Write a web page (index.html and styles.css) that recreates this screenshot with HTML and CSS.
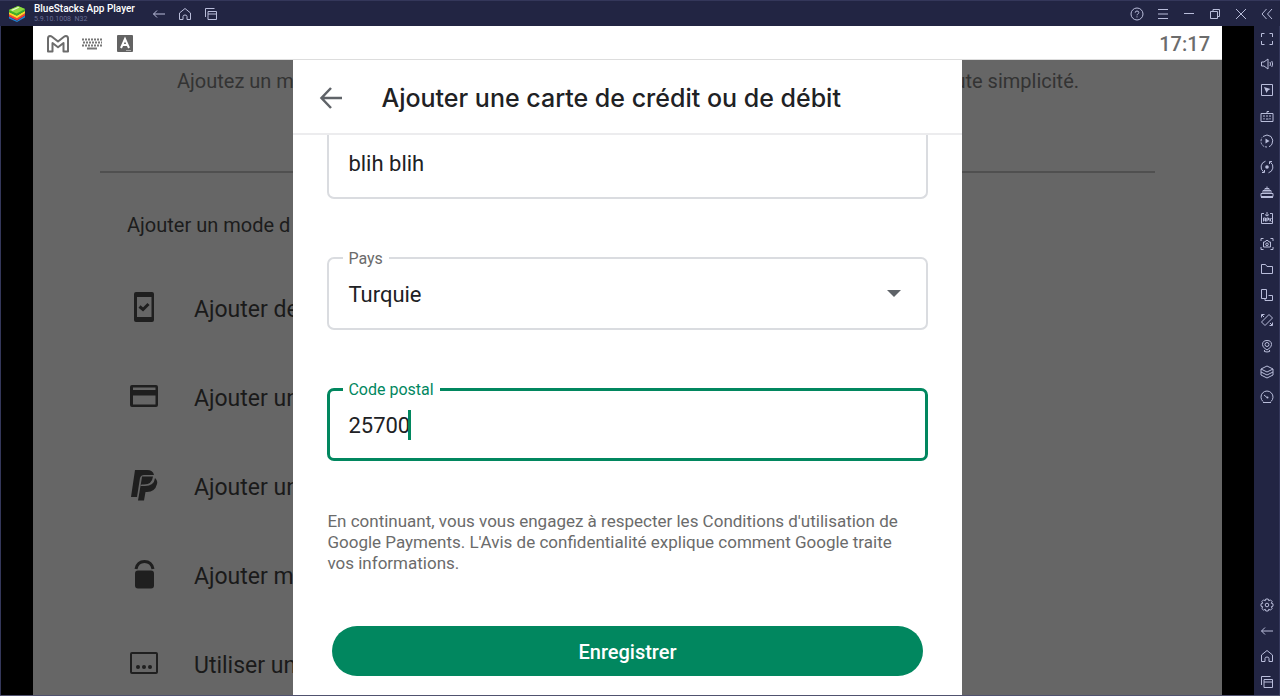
FILE: index.html
```
<!DOCTYPE html>
<html lang="fr">
<head>
  <meta charset="UTF-8">
  <meta name="viewport" content="width=device-width, initial-scale=1.0">
  <title>BlueStacks App Player</title>
  <link rel="stylesheet" href="styles.css">
</head>
<body>
  <header class="titlebar">
    <svg class="logo" width="18" height="18" viewBox="0 0 18 18">
      <path d="M1 11.5L9 15.8L17 10.5V12.6L9 17L1 13.4Z" fill="#1b86d8"/>
      <path d="M1 9L9 13L17 8V10.6L9 15.4L1 11.6Z" fill="#ef3e36"/>
      <path d="M1 6.8L9 10.6L17 5.8V8.2L9 13.2L1 9.2Z" fill="#ffd42a"/>
      <path d="M1 5L10 1L17 4V6L8.6 10.8L1 7.2Z" fill="#3fae2a"/>
      <path d="M1 5L10 1L17 4L8.6 8.6Z" fill="#8ed83f"/>
      <path d="M3 5L10 2L11.5 2.6L4.6 5.8Z" fill="#e9f7d8"/>
    </svg>
    <div class="app-info">
      <div class="app-name">BlueStacks App Player</div>
      <div class="app-version">5.9.10.1008&nbsp; N32</div>
    </div>
    <nav class="bar-buttons">
      <button class="icon-button" aria-label="Retour"><svg viewBox="0 0 14 14"><path d="M13 7H1.5M5 3.5L1.5 7L5 10.5"/></svg></button>
      <button class="icon-button" aria-label="Accueil"><svg viewBox="0 0 14 14"><path d="M1.5 6L7 1.5L12.5 6V12.5H9V9.5Q9 8 7 8Q5 8 5 9.5V12.5H1.5Z"/></svg></button>
      <button class="icon-button" aria-label="Applications récentes"><svg viewBox="0 0 14 14"><path d="M4 4.5H12.5V12.5H4ZM4 7H12.5M1.5 10V1.5H10.5"/></svg></button>
    </nav>
    <div class="bar-buttons window-buttons">
      <button class="icon-button" aria-label="Aide"><svg viewBox="0 0 14 14"><circle cx="7" cy="7" r="6"/><path d="M5.2 5.7Q5.2 4 7 4Q8.8 4 8.8 5.5Q8.8 6.5 7.8 7Q7 7.4 7 8.3M7 9.4V10.4"/></svg></button>
      <button class="icon-button" aria-label="Menu"><svg viewBox="0 0 14 14"><path d="M2 2.5H12M2 7H12M2 11.5H12"/></svg></button>
      <button class="icon-button" aria-label="Réduire"><svg viewBox="0 0 14 14"><path d="M2 6.5H12"/></svg></button>
      <button class="icon-button" aria-label="Restaurer"><svg viewBox="0 0 14 14"><path d="M2.5 4.5H9.5V11.5H2.5ZM5 4.5V2.5H11.5V9.5H9.5"/></svg></button>
      <button class="icon-button" aria-label="Fermer"><svg viewBox="0 0 14 14"><path d="M2 2L12 12M12 2L2 12"/></svg></button>
      <button class="icon-button" aria-label="Replier"><svg viewBox="0 0 14 14"><path d="M6.5 2L2 7L6.5 12M12 2L7.5 7L12 12"/></svg></button>
    </div>
  </header>

  <div class="player">
    <main class="screen">
      <div class="statusbar">
        <div class="status-icons">
          <svg width="24" height="20" viewBox="0 0 24 20" fill="none" stroke="#6c6c6c" stroke-width="2" stroke-linejoin="round">
            <path d="M2 4.5Q2 2 4 2Q5 2 6 2.8L12 7.5L18 2.8Q19 2 20 2Q22 2 22 4.5V17.5H17.5V9L12 13.3L6.5 9V17.5H2Z"/>
          </svg>
          <svg width="20" height="12" viewBox="0 0 20 12" fill="none" stroke="#777">
            <path d="M0 1.500H20M1 4.500H20M0 7.500H20" stroke-width="2" stroke-dasharray="2 1"/>
            <path d="M5 10.500H15" stroke-width="2"/>
          </svg>
          <svg width="16" height="17" viewBox="0 0 16 17">
            <rect width="16" height="17" rx="1" fill="#636363"/>
            <path d="M4 13L8 4L12 13M5.5 10H10.5" fill="none" stroke="#fff" stroke-width="2"/>
            <path d="M9 15.5H14" stroke="#aaa"/>
          </svg>
        </div>
        <div class="clock">17:17</div>
      </div>

      <div class="page">
        <section class="backdrop backdrop-left">
          <p class="intro">Ajoutez un m</p>
          <hr>
          <h2>Ajouter un mode d</h2>
          <ul class="methods">
            <li>
              <svg viewBox="0 0 32 32"><path d="M8 1H24Q26 1 26 3V29Q26 31 24 31H8Q6 31 6 29V3Q6 1 8 1ZM9 6V26H23.500V6Z" fill-rule="evenodd"/><path d="M11.500 15.500L15 18.500L20.500 13" class="line"/></svg>
              <span>Ajouter de</span>
            </li>
            <li>
              <svg viewBox="0 0 32 32"><path d="M4 5H28Q30 5 30 7V25Q30 27 28 27H4Q2 27 2 25V7Q2 5 4 5ZM5 7.500V10H27.500V7.500ZM5 15.500V24.500H27.500V15.500Z" fill-rule="evenodd"/></svg>
              <span>Ajouter un</span>
            </li>
            <li>
              <svg viewBox="0 0 32 32"><path d="M7 1H19Q25 1 26 6H16Q13 6 12 9L9 28H3Z"/><path d="M14 7.500H25Q24 15.500 16 15.500H13.500L12.500 17L14 8Z"/><path d="M27 9Q30 12 29 15Q27 23 19 23H17.500L16 31.500H10L12.500 17H17Q26 17 27 9Z"/></svg>
              <span>Ajouter un</span>
            </li>
            <li>
              <svg viewBox="0 0 32 32"><path d="M8 11Q9.500 3.500 16.500 3.500Q23.500 3.500 25 11" class="line"/><rect x="7" y="12.500" width="19" height="18" rx="3"/></svg>
              <span>Ajouter m</span>
            </li>
            <li>
              <svg viewBox="0 0 32 32"><rect x="3" y="6" width="26" height="20" rx="1" class="line thin"/><circle cx="10" cy="20" r="2"/><circle cx="16" cy="20" r="2"/><circle cx="22" cy="20" r="2"/></svg>
              <span>Utiliser un</span>
            </li>
          </ul>
        </section>

        <form class="dialog">
          <div class="dialog-header">
            <button type="button" class="back" aria-label="Retour">
              <svg width="24" height="24" viewBox="0 0 24 24" fill="none" stroke="#5f6368" stroke-width="2.500"><path d="M23 12H3M12 2L2.500 12L12 22"/></svg>
            </button>
            <h1>Ajouter une carte de crédit ou de débit</h1>
          </div>
          <div class="dialog-body">
            <div class="field field-cut">
              <input type="text" value="blih blih" aria-label="Nom">
            </div>
            <fieldset class="field">
              <legend><label for="country">Pays</label></legend>
              <select id="country">
                <option>Turquie</option>
              </select>
            </fieldset>
            <fieldset class="field field-active">
              <legend><label for="postal">Code postal</label></legend>
              <input id="postal" type="text" value="25700"><span class="caret"></span>
            </fieldset>
            <p class="terms">En continuant, vous vous engagez à respecter les Conditions d'utilisation de Google Payments. L'Avis de confidentialité explique comment Google traite vos informations.</p>
            <button type="submit" class="save">Enregistrer</button>
          </div>
        </form>

        <section class="backdrop backdrop-right">
          <p class="intro">ute simplicité.</p>
          <hr>
        </section>
      </div>
    </main>

    <aside class="sidebar">
      <div class="tools">
        <button class="icon-button" aria-label="Plein écran"><svg viewBox="0 0 14 14"><path d="M1.500 5V1.500H4.500M9.500 1.500H12.500V5M12.500 9V12.500H9.500M4.500 12.500H1.500V9"/></svg></button>
        <button class="icon-button" aria-label="Volume"><svg viewBox="0 0 14 14"><path d="M1.500 5H4L8 2V12L4 9H1.500ZM10 5Q11 7 10 9M11.800 4Q13.500 7 11.800 10"/></svg></button>
        <button class="icon-button" aria-label="Curseur"><svg viewBox="0 0 14 14"><path d="M1.500 1.500H12.500V12.500H1.500Z"/><path d="M4 4L10.500 6L8 7.500L6.500 10Z" class="solid"/></svg></button>
        <button class="icon-button" aria-label="Commandes clavier"><svg viewBox="0 0 14 14"><path d="M1 4.500H13V12.500H1ZM7 4.500V2.500H9M3 7H5M6 7H8M9 7H11M4 9V10.500M6 10H8.500M10 9V10.500"/></svg></button>
        <button class="icon-button" aria-label="Macro"><svg viewBox="0 0 14 14"><path d="M3 2.500Q7 -0.500 11 2.500Q14 6 12 10Q11 12 9 12.700"/><path d="M7 13Q2 13 1 8Q1 5 2 3.500" stroke-dasharray="2 1"/><path d="M5.500 4.500L9.500 7L5.500 9.500Z" class="solid"/></svg></button>
        <button class="icon-button" aria-label="Synchronisation"><svg viewBox="0 0 14 14"><path d="M5.500 1.200A6 6 0 0 0 3.500 11.800M2 12.500H4.500V10M8.500 12.800A6 6 0 0 0 10.500 2.200M12 1.500H9.500V4"/><circle cx="7" cy="7" r="1.800" class="solid"/></svg></button>
        <button class="icon-button" aria-label="Instances"><svg viewBox="0 0 14 14"><path d="M1 8.500H13V11.500H1ZM3 8V5.500H11V8M5 5V3.500H9V5M7 3V1.500M5 6V8M7 4V8M9 6V8M1 12.500H13"/></svg></button>
        <button class="icon-button" aria-label="Installer un APK"><svg viewBox="0 0 14 14"><path d="M4 2.500H1.500V12.500H12.500V2.500H10M7 1V4.500M5 3.500L7 5L9 3.500M3.500 10.500V7H5.500V10.500M3.500 9H5.500M6.800 10.500V7H8.500V9H6.800M10 7V10.500M11.500 7L10 9L11.500 10.500"/></svg></button>
        <button class="icon-button" aria-label="Capture d'écran"><svg viewBox="0 0 14 14"><path d="M1 4V1.500H3.500M10.500 1.500H13V4M13 10V12.500H10.500M3.500 12.500H1V10M3.500 5H5L6 3.500H8L9 5H10.500V10H3.500Z"/><circle cx="7" cy="7.300" r="1.300"/></svg></button>
        <button class="icon-button" aria-label="Dossier"><svg viewBox="0 0 14 14"><path d="M1.500 2.500H5.500L7 4.500H12.500V11.500H1.500Z"/></svg></button>
        <button class="icon-button" aria-label="Rotation"><svg viewBox="0 0 14 14"><path d="M1.500 1.500H6.500V10.500H1.500ZM8.500 7.500H12.500V12.500H5V10.500"/></svg></button>
        <button class="icon-button" aria-label="Secouer"><svg viewBox="0 0 14 14"><path d="M9 1.500L12.500 5L5 12.500L1.500 9ZM1.500 4.500V1.500H4.500M2 2L4 4M12.500 9.500V12.500H9.500M12 12L10 10"/></svg></button>
        <button class="icon-button" aria-label="Localisation"><svg viewBox="0 0 14 14"><path d="M5 9.500Q2.500 8 2.500 5.500Q2.500 1.500 7 1.500Q11.500 1.500 11.500 5.500Q11.500 8 9 9.500L7 11ZM4.500 11Q3 13 7 13Q11 13 9.500 11"/><circle cx="7" cy="5.500" r="2"/></svg></button>
        <button class="icon-button" aria-label="Gestionnaire d'instances"><svg viewBox="0 0 14 14"><path d="M7 1L13 4L7 7L1 4ZM1 4V10L7 13L13 10V4M1 7L7 10L13 7"/></svg></button>
        <button class="icon-button" aria-label="Performances"><svg viewBox="0 0 14 14"><path d="M3 11.500A6 6 0 1 1 11 11.500M3 12.500H11M7 7.500L4 5"/><circle cx="7.500" cy="7.500" r="1" class="solid"/></svg></button>
      </div>
      <div class="tools tools-bottom">
        <button class="icon-button" aria-label="Paramètres"><svg viewBox="0 0 14 14"><path d="M5.800 1H8.200L8.700 2.700L10.500 1.900L12.100 3.500L11.300 5.300L13 5.800V8.200L11.300 8.700L12.100 10.500L10.500 12.100L8.700 11.300L8.200 13H5.800L5.300 11.300L3.500 12.100L1.900 10.500L2.700 8.700L1 8.200V5.800L2.700 5.300L1.900 3.500L3.500 1.900L5.300 2.700Z"/><circle cx="7" cy="7" r="1.800"/></svg></button>
        <button class="icon-button" aria-label="Retour"><svg viewBox="0 0 14 14"><path d="M13 7H1.500M5 3.500L1.500 7L5 10.500"/></svg></button>
        <button class="icon-button" aria-label="Accueil"><svg viewBox="0 0 14 14"><path d="M1.500 6L7 1.500L12.500 6V12.500H9V9.500Q9 8 7 8Q5 8 5 9.500V12.500H1.500Z"/></svg></button>
        <button class="icon-button" aria-label="Applications récentes"><svg viewBox="0 0 14 14"><path d="M4 4.500H12.500V12.500H4ZM4 7H12.500M1.500 10V1.500H10.500"/></svg></button>
      </div>
    </aside>
  </div>
</body>
</html>
```
FILE: styles.css
```
:root {
  --navy: #222543;
  --navy-icon: #b9bdda;
  --green: #01875f;
  --text: #202124;
  --muted: #6b6b6b;
  --border: #dadce0;
  --dim: #666666;
  --ui-font: Roboto, "Liberation Sans", sans-serif;
  --title-font: Inter, Roboto, sans-serif;
}

* {
  box-sizing: border-box;
}

body {
  margin: 0;
  height: 100vh;
  display: flex;
  flex-direction: column;
  background: #000;
  border-bottom: 1px solid #50526f;
  font-family: var(--ui-font);
  color: var(--text);
  overflow: hidden;
}

button,
input,
select {
  font: inherit;
  color: inherit;
  border: 0;
  padding: 0;
  background: none;
}

/* emulator window */
.titlebar {
  height: 26px;
  flex: none;
  display: flex;
  align-items: center;
  background: var(--navy);
  border-top: 1px solid #34375a;
  padding-left: 8px;
}

.app-info {
  width: 112px;
  margin-left: 8px;
  white-space: nowrap;
}

.app-name {
  font-size: 10px;
  line-height: 12px;
  font-weight: 500;
  color: #fff;
}

.app-version {
  font-size: 7px;
  line-height: 9px;
  color: #696d95;
}

.bar-buttons {
  display: flex;
}

.window-buttons {
  margin-left: auto;
}

.icon-button {
  width: 26px;
  height: 26px;
  display: flex;
  align-items: center;
  justify-content: center;
}

.icon-button svg {
  width: 14px;
  height: 14px;
  fill: none;
  stroke: var(--navy-icon);
}

.icon-button .solid {
  fill: var(--navy-icon);
  stroke: none;
}

.player {
  flex: 1;
  min-height: 0;
  display: flex;
  border-left: 1px solid #34375a;
}

.sidebar {
  width: 26px;
  flex: none;
  display: flex;
  flex-direction: column;
  justify-content: space-between;
  background: var(--navy);
  border-right: 1px solid #34375a;
}

.tools {
  height: 384px;
  display: grid;
  grid-auto-rows: 1fr;
}

.tools .icon-button {
  width: 25px;
  height: auto;
}

.tools-bottom {
  height: 103px;
}

/* android screen */
.screen {
  flex: 1;
  min-width: 0;
  margin: 0 32px;
  display: flex;
  flex-direction: column;
}

.statusbar {
  height: 34px;
  flex: none;
  display: flex;
  align-items: center;
  justify-content: space-between;
  padding: 2px 12px 0 13px;
  background: #fff;
  border-bottom: 1px solid #ddd;
}

.status-icons {
  display: flex;
  align-items: center;
  gap: 12px;
}

.status-icons svg:last-child {
  margin-left: 3px;
}

.clock {
  font-size: 20px;
  font-weight: 500;
  color: #6c6c6c;
}

.page {
  flex: 1;
  min-height: 0;
  display: flex;
  background: var(--dim);
}

.backdrop {
  flex: 1;
  min-width: 0;
  overflow: hidden;
  white-space: nowrap;
}

.backdrop-left {
  padding-left: 67px;
}

.backdrop-right {
  padding-right: 67px;
}

.backdrop .intro {
  margin: 0 0 69px;
  font-size: 20px;
  line-height: 42px;
  color: #333;
}

.backdrop-left .intro {
  padding-left: 77px;
}

.backdrop-right .intro {
  display: flex;
  justify-content: flex-end;
  padding-right: 76px;
}

.backdrop hr {
  margin: 0;
  border: 0;
  border-top: 2px solid #505050;
}

.backdrop h2 {
  margin: 42px 0 29px;
  padding-left: 27px;
  font-size: 20px;
  line-height: 20px;
  font-weight: 400;
  color: #1c1c1c;
}

.methods {
  margin: 0;
  padding: 0 0 0 28px;
  list-style: none;
}

.methods li {
  height: 89px;
  display: flex;
  align-items: center;
  gap: 34px;
  font-size: 23px;
  color: #1a1a1a;
}

.methods span {
  padding-top: 2px;
}

.methods svg {
  width: 32px;
  height: 32px;
  flex: none;
  margin-bottom: 4px;
  fill: #1f1f1f;
}

.methods .line {
  fill: none;
  stroke: #1f1f1f;
  stroke-width: 3;
}

.methods .thin {
  stroke-width: 2;
}

/* card form */
.dialog {
  width: 56.2%;
  flex: none;
  background: #fff;
}

.dialog-header {
  height: 75px;
  display: flex;
  align-items: center;
  padding: 2px 0 0 26px;
  border-bottom: 2px solid #ececee;
}

.back {
  width: 24px;
  height: 24px;
}

.dialog h1 {
  margin: 0 0 0 38px;
  font-family: var(--title-font);
  font-size: 25px;
  line-height: 28px;
  font-weight: 500;
  white-space: nowrap;
}

.dialog-body {
  padding: 0 34px;
}

.field {
  display: flex;
  min-width: 0;
  margin: 0 0 48px;
  padding: 0 19px 0 14px;
  border: 2px solid var(--border);
  border-radius: 7px;
  font-size: 22px;
}

.field-cut {
  height: 64px;
  padding: 0 19px;
  border-top: 0;
  border-radius: 0 0 7px 7px;
}

.field-cut input {
  flex: 1;
  height: 56px;
}

.field legend {
  padding: 2px 6px 0 5px;
  font-size: 16px;
  line-height: 20px;
  color: var(--muted);
}

.field select {
  flex: 1;
  height: 59px;
  padding: 0 0 8px 5px;
  appearance: none;
  background-image: url("data:image/svg+xml,%3Csvg xmlns='http://www.w3.org/2000/svg' width='14' height='7'%3E%3Cpath d='M0 0H14L7 7Z' fill='%235f6368'/%3E%3C/svg%3E");
  background-repeat: no-repeat;
  background-position: right 6px top 21px;
}

.field-active {
  align-items: center;
  padding-left: 13px;
  border: 3px solid var(--green);
}

.field-active legend {
  color: var(--green);
}

.field-active input {
  field-sizing: content;
  height: 58px;
  padding: 0 0 8px 5px;
}

.caret {
  width: 3px;
  height: 30px;
  margin: 0 0 8px -2px;
  background: var(--green);
}

.terms {
  margin: 0 0 52px;
  padding: 2px 14px 0 0;
  font-size: 17px;
  line-height: 21px;
  color: var(--muted);
}

.save {
  width: calc(100% - 10px);
  height: 50px;
  margin: 0 5px;
  padding-top: 2px;
  border-radius: 25px;
  background: var(--green);
  color: #fff;
  font-size: 20px;
  font-weight: 500;
}
```
